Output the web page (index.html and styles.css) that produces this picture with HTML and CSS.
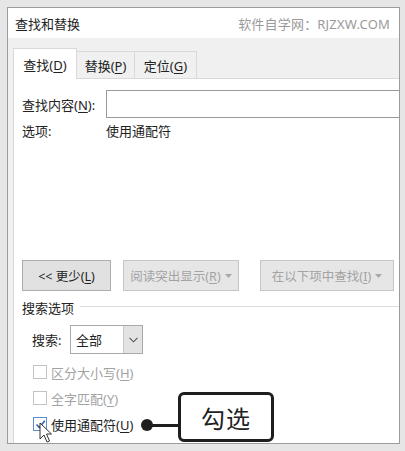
FILE: index.html
```html
<!DOCTYPE html>
<html lang="zh">
<head>
<meta charset="utf-8">
<link rel="stylesheet" href="styles.css">
</head>
<body>
<div class="dialog">
  <div class="titlebar">
    <span class="title">查找和替换</span>
    <span class="brand">软件自学网：RJZXW.COM</span>
  </div>
  <div class="tabs">
    <div class="tab active"><span>查找(<u>D</u>)</span></div>
    <div class="tab"><span>替换(<u>P</u>)</span></div>
    <div class="tab"><span>定位(<u>G</u>)</span></div>
  </div>
  <div class="panel">
    <div class="field-row">
      <span class="label">查找内容(<u>N</u>):</span>
      <div class="input"></div>
    </div>
    <div class="opt-row">
      <span class="label">选项:</span>
      <span>使用通配符</span>
    </div>
    <div class="btn-row">
      <div class="btn b1"><span>&lt;&lt; 更少(<u>L</u>)</span></div>
      <div class="btn b2 disabled"><span>阅读突出显示(<u>R</u>)</span><svg class="tri" width="7" height="4" viewBox="0 0 7 4"><path d="M0 0H7L3.5 4Z" fill="#a8a8a8"/></svg></div>
      <div class="btn b3 disabled"><span>在以下项中查找(<u>I</u>)</span><svg class="tri" width="7" height="4" viewBox="0 0 7 4"><path d="M0 0H7L3.5 4Z" fill="#a8a8a8"/></svg></div>
    </div>
    <div class="group-head"><span>搜索选项</span><div class="rule"></div></div>
    <div class="group">
      <div class="select-row">
        <span class="sel-label">搜索:</span>
        <div class="select">
          <span class="sel-val">全部</span>
          <span class="sel-btn"><svg width="9" height="6" viewBox="0 0 9 6"><path d="M0.5 0.8L4.5 4.8L8.5 0.8" fill="none" stroke="#555" stroke-width="1.1"/></svg></span>
        </div>
      </div>
      <div class="check-row disabled"><span class="box"></span><span>区分大小写(<u>H</u>)</span></div>
      <div class="check-row disabled"><span class="box"></span><span>全字匹配(<u>Y</u>)</span></div>
      <div class="check-row"><span class="box checked"><svg width="11" height="11" viewBox="0 0 11 11"><path d="M1.5 5.5L4.3 8.5L9.8 1.8" fill="none" stroke="#2f63b0" stroke-width="1.6"/></svg></span><span>使用通配符(<u>U</u>)</span></div>
    </div>
  </div>
</div>
<svg class="cursor" width="14" height="22" viewBox="0 0 14 22"><path d="M1 1V17L5 13L8 20L10.5 19L7.5 12H12.5Z" fill="#fff" stroke="#333" stroke-width="1" stroke-linejoin="round"/></svg>
<div class="callout">
  <div class="pin"><span class="dot"></span><span class="line"></span></div>
  <div class="note">勾选</div>
</div>
</body>
</html>
```
FILE: styles.css
```css
* { box-sizing: border-box; }
html, body { margin: 0; }
body {
  width: 405px;
  height: 451px;
  background: #e6e6e6;
  padding: 7px 0 0 7px;
  font-family: "Noto Sans", "Noto Sans CJK SC", sans-serif;
  font-size: 13px;
  color: #222;
  overflow: hidden;
}
u { text-decoration: underline; text-underline-offset: 2px; }
.dialog {
  width: 393px;
  height: 437px;
  border: 1px solid #9c9c9c;
  background: #f0f0f0;
  display: flex;
  flex-direction: column;
  overflow: hidden;
}
.titlebar {
  height: 30px;
  background: #fff;
  display: flex;
  align-items: center;
  justify-content: space-between;
  padding: 0 9px 0 7px;
  flex: none;
}
.title { color: #222; }
.brand { color: #9a9a9a; letter-spacing: 0.2px; }
.tabs {
  margin: 10px 0 0 5px;
  display: flex;
  align-items: flex-end;
  height: 30px;
  flex: none;
  position: relative;
  z-index: 1;
}
.tab {
  height: 27px;
  border: 1px solid #d9d9d9;
  border-bottom: none;
  border-left: none;
  background: #f0f0f0;
  display: flex;
  align-items: center;
  justify-content: center;
  color: #222;
}
.tab:nth-child(2) { width: 58px; }
.tab:nth-child(3) { width: 62px; }
.tab.active {
  width: 64px;
  border-left: 1px solid #d9d9d9;
  background: #fff;
  margin-bottom: -1px;
  height: 31px;
}
.panel {
  flex: 1;
  margin-left: 5px;
  margin-right: -12px;
  border: 1px solid #d9d9d9;
  border-bottom: none;
  background: #fff;
  padding: 11px 0 0 8px;
  display: flex;
  flex-direction: column;
}
.field-row { display: flex; align-items: center; height: 28px; }
.label { width: 84px; flex: none; }
.input { flex: 1; height: 28px; border: 1px solid #9a9a9a; background: #fff; }
.opt-row { display: flex; align-items: center; height: 20px; margin-top: 2px; }
.btn-row { display: flex; margin-top: 120px; height: 31px; }
.btn {
  height: 31px;
  border: 1px solid #adadad;
  background: #e1e1e1;
  display: flex;
  align-items: center;
  justify-content: center;
  gap: 4px;
  font-size: 12.5px;
}
.b1 { width: 89px; }
.b2 { width: 116px; margin-left: 12px; }
.b3 { width: 134px; margin-left: 21px; }
.btn.disabled { background: #e6e6e6; border-color: #c6c6c6; color: #a3a3a3; }
.group-head { display: flex; align-items: center; height: 18px; margin-top: 7px; }
.rule { flex: 1; height: 1px; background: #dcdcdc; margin: 0 0 2px 6px; }
.group { padding-left: 10px; }
.select-row { display: flex; align-items: center; margin-top: 9px; height: 29px; }
.sel-label { width: 38px; }
.select { width: 73px; height: 29px; border: 1px solid #a9a9a9; display: flex; }
.sel-val { flex: 1; display: flex; align-items: center; padding-left: 5px; }
.sel-btn {
  width: 19px;
  background: #e3e3e3;
  border-left: 1px solid #c9c9c9;
  display: flex;
  align-items: center;
  justify-content: center;
}
.check-row { display: flex; align-items: center; height: 26px; gap: 4px; }
.select-row + .check-row { margin-top: 5px; }
.check-row.disabled { color: #a3a3a3; }
.box {
  width: 14px;
  height: 14px;
  border: 1px solid #c3c3c3;
  background: #fff;
  margin-left: 1px;
  display: flex;
  align-items: center;
  justify-content: center;
}
.box.checked { border-color: #5c8fd6; }
.cursor { position: absolute; left: 39px; top: 422px; }
.callout {
  position: absolute;
  left: 141px;
  top: 392px;
  display: flex;
  align-items: flex-start;
}
.pin { display: flex; align-items: center; margin-top: 27px; }
.dot { width: 12px; height: 12px; border-radius: 50%; background: #1e1e1e; }
.line { width: 26px; height: 3px; background: #1e1e1e; margin-left: -1px; }
.note {
  width: 96px;
  height: 50px;
  border: 3px solid #1e1e1e;
  border-radius: 6px;
  background: #fff;
  display: flex;
  align-items: center;
  justify-content: center;
  font-family: "Noto Sans CJK SC", sans-serif;
  font-size: 24px;
  color: #222;
  letter-spacing: 1px;
}
```
